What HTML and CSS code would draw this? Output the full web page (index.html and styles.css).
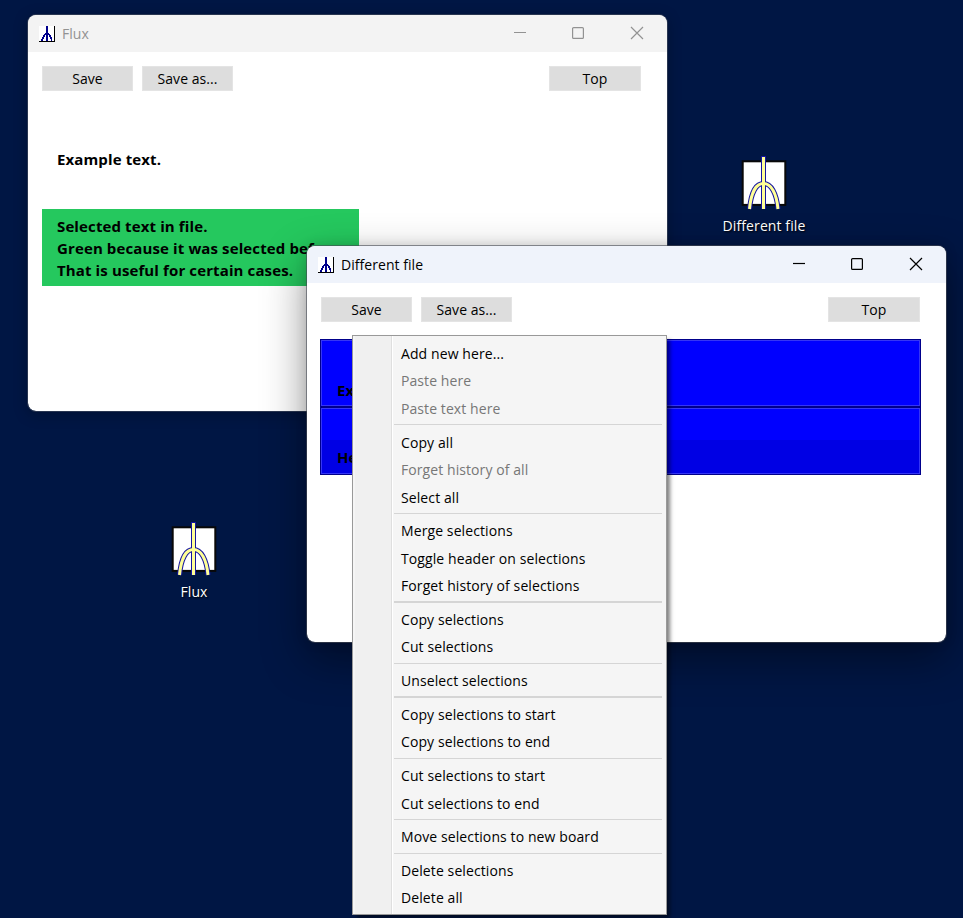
FILE: index.html
```html
<!DOCTYPE html>
<html lang="en">
<head>
<meta charset="utf-8">
<title>Flux</title>
<link rel="stylesheet" href="styles.css">
</head>
<body>
<svg class="defs" width="0" height="0">
  <symbol id="mini" viewBox="0 0 16 16">
    <g shape-rendering="crispEdges">
      <rect width="16" height="16" fill="#fff"/>
      <path d="M15 0h1v16H0v-1h15z" fill="#000"/>
      <path d="M7 0h2v15H7zM6 7h4v1H6zM5 8h2v1H5zM9 8h2v1H9zM4 9h2v2H4zM10 9h2v2h-2zM3 11h2v2H3zM11 11h2v2h-2zM2 13h2v2H2zM12 13h1v2h-1z" fill="#00008b"/>
    </g>
  </symbol>
  <symbol id="flux" viewBox="0 0 46 54">
    <rect x="1.700" y="5.300" width="42.600" height="43.600" fill="#fff" stroke="#080808" stroke-width="2"/>
    <g fill="none">
      <path d="M8.500 53C10 37 15 27.500 22.500 27.500S35.500 37 37 53" stroke="#1515a0" stroke-width="5"/>
      <path d="M22.500 0V53" stroke="#1515a0" stroke-width="5"/>
      <path d="M8.500 53C10 37 15 27.500 22.500 27.500S35.500 37 37 53" stroke="#ffff96" stroke-width="3"/>
      <path d="M22.500 1V53" stroke="#ffff96" stroke-width="3"/>
    </g>
  </symbol>
  <symbol id="controls" viewBox="0 0 132 14">
    <g fill="none" stroke="currentColor" stroke-width="1.2">
      <path d="M1 6.500h12"/>
      <rect x="59.600" y="1.600" width="10.800" height="10.800" rx="1"/>
      <path d="M118 1l12 12M130 1l-12 12"/>
    </g>
  </symbol>
</svg>

<main class="desktop">
  <div class="shortcut shortcut-file"><svg width="46" height="54"><use href="#flux"/></svg><span>Different file</span></div>
  <div class="shortcut shortcut-flux"><svg width="46" height="54"><use href="#flux"/></svg><span>Flux</span></div>

  <section class="window window-flux">
    <header class="titlebar">
      <svg width="16" height="16"><use href="#mini"/></svg><span>Flux</span>
      <svg class="controls" width="132" height="14"><use href="#controls"/></svg>
    </header>
    <div class="toolbar"><button>Save</button><button>Save as...</button><button class="top">Top</button></div>
    <p class="note">Example text.</p>
    <p class="note selected">Selected text in file.<br>Green because it was selected before.<br>That is useful for certain cases.</p>
  </section>

  <section class="window window-file active">
    <header class="titlebar">
      <svg width="16" height="16"><use href="#mini"/></svg><span>Different file</span>
      <svg class="controls" width="132" height="14"><use href="#controls"/></svg>
    </header>
    <div class="toolbar"><button>Save</button><button>Save as...</button><button class="top">Top</button></div>
    <div class="board">
      <div class="cell">Example</div>
      <div class="cell shaded">Header</div>
    </div>
  </section>

  <ul class="menu">
    <li>Add new here...</li>
    <li class="off">Paste here</li>
    <li class="off">Paste text here</li>
    <li class="sep"></li>
    <li>Copy all</li>
    <li class="off">Forget history of all</li>
    <li>Select all</li>
    <li class="sep"></li>
    <li>Merge selections</li>
    <li>Toggle header on selections</li>
    <li>Forget history of selections</li>
    <li class="sep thick"></li>
    <li>Copy selections</li>
    <li>Cut selections</li>
    <li class="sep"></li>
    <li>Unselect selections</li>
    <li class="sep thick"></li>
    <li>Copy selections to start</li>
    <li>Copy selections to end</li>
    <li class="sep"></li>
    <li>Cut selections to start</li>
    <li>Cut selections to end</li>
    <li class="sep"></li>
    <li>Move selections to new board</li>
    <li class="sep"></li>
    <li>Delete selections</li>
    <li>Delete all</li>
  </ul>
</main>
</body>
</html>
```
FILE: styles.css
```css
* { box-sizing: border-box; }
body { margin: 0; font: 14px/20px "Segoe UI", "Open Sans", "Noto Sans", sans-serif; letter-spacing: 0.05px; color: #000; }
.defs { position: absolute; }
.desktop { position: relative; width: 963px; height: 918px; overflow: hidden; background: #001644; }

.shortcut { position: absolute; width: 110px; display: flex; flex-direction: column; align-items: center; color: #fff; text-shadow: 1px 1px 2px #000; }
.shortcut span { margin-top: 6px; letter-spacing: .1px; }
.shortcut-file { left: 709px; top: 156px; }
.shortcut-flux { left: 139px; top: 522px; }

.window { position: absolute; width: 641px; height: 398px; border: 1px solid #283550; border-radius: 9px; background: #fff; background-clip: padding-box; overflow: hidden; }
.window-flux { left: 27px; top: 14px; box-shadow: 0 3px 14px rgba(0, 0, 0, .25); }
.window-file { left: 306px; top: 245px; border-color: rgba(70, 75, 85, .6); box-shadow: 0 16px 44px rgba(0, 0, 0, .42), 0 0 12px rgba(0, 0, 0, .12); }

.titlebar { height: 37px; display: flex; align-items: center; padding: 0 22px 0 11px; background: #f3f3f3; color: #929292; }
.titlebar span { margin-left: 7px; }
.titlebar .controls { margin: 0 0 2px auto; }
.active .titlebar { background: #eff3fb; color: #000; }

.toolbar { display: flex; gap: 9px; padding: 14px 26px 0 14px; }
.toolbar button { width: 91px; height: 25px; padding: 0; border: 1px solid #e4e4e4; background: #ddd; color: #000; font: inherit; letter-spacing: inherit; line-height: 22px; }
.toolbar .top { width: 92px; margin-left: auto; }

.note { margin: 57px 0 0 14px; padding-left: 15px; font-size: 15px; line-height: 22px; font-weight: 700; letter-spacing: .12px; }
.note.selected { width: 317px; height: 77px; margin-top: 39px; padding: 6px 0 0 15px; background: #25c85e; white-space: nowrap; overflow: hidden; }

.board { display: grid; gap: 2px; width: 601px; margin: 17px 0 0 13px; border: 1px solid #00008b; background: #00008b; font-size: 15px; font-weight: 700; }
.cell { height: 66px; padding: 39px 0 0 15px; border: 1px solid #3535f5; background: #00f; }
.cell.shaded { padding-top: 38px; background: linear-gradient(#00f 31px, #0000e4 31px); }

.menu { position: absolute; left: 352px; top: 335px; width: 315px; height: 580px; margin: 0; padding: 3.9px 4px 0 41px; list-style: none; border: 1px solid #999; background: linear-gradient(90deg, #f5f5f5 2px, #f0f0f0 2px 38px, #dfdfdf 38px 39px, #fff 39px 40px, #f5f5f5 40px); box-shadow: 4px 4px 4px -1px rgba(0, 0, 0, .5); letter-spacing: .1px; }
.menu li { height: 27.5px; padding-left: 7px; line-height: 27.2px; white-space: nowrap; }
.menu .off { color: #777; letter-spacing: .08px; }
.menu .sep { height: 6.2px; padding: 1.8px 0 0; line-height: 0; }
.menu .sep::before { content: ""; display: block; height: 1px; background: #d5d5d5; }
.menu .thick { padding-top: 1.3px; }
.menu .thick::before { height: 2px; }
```
